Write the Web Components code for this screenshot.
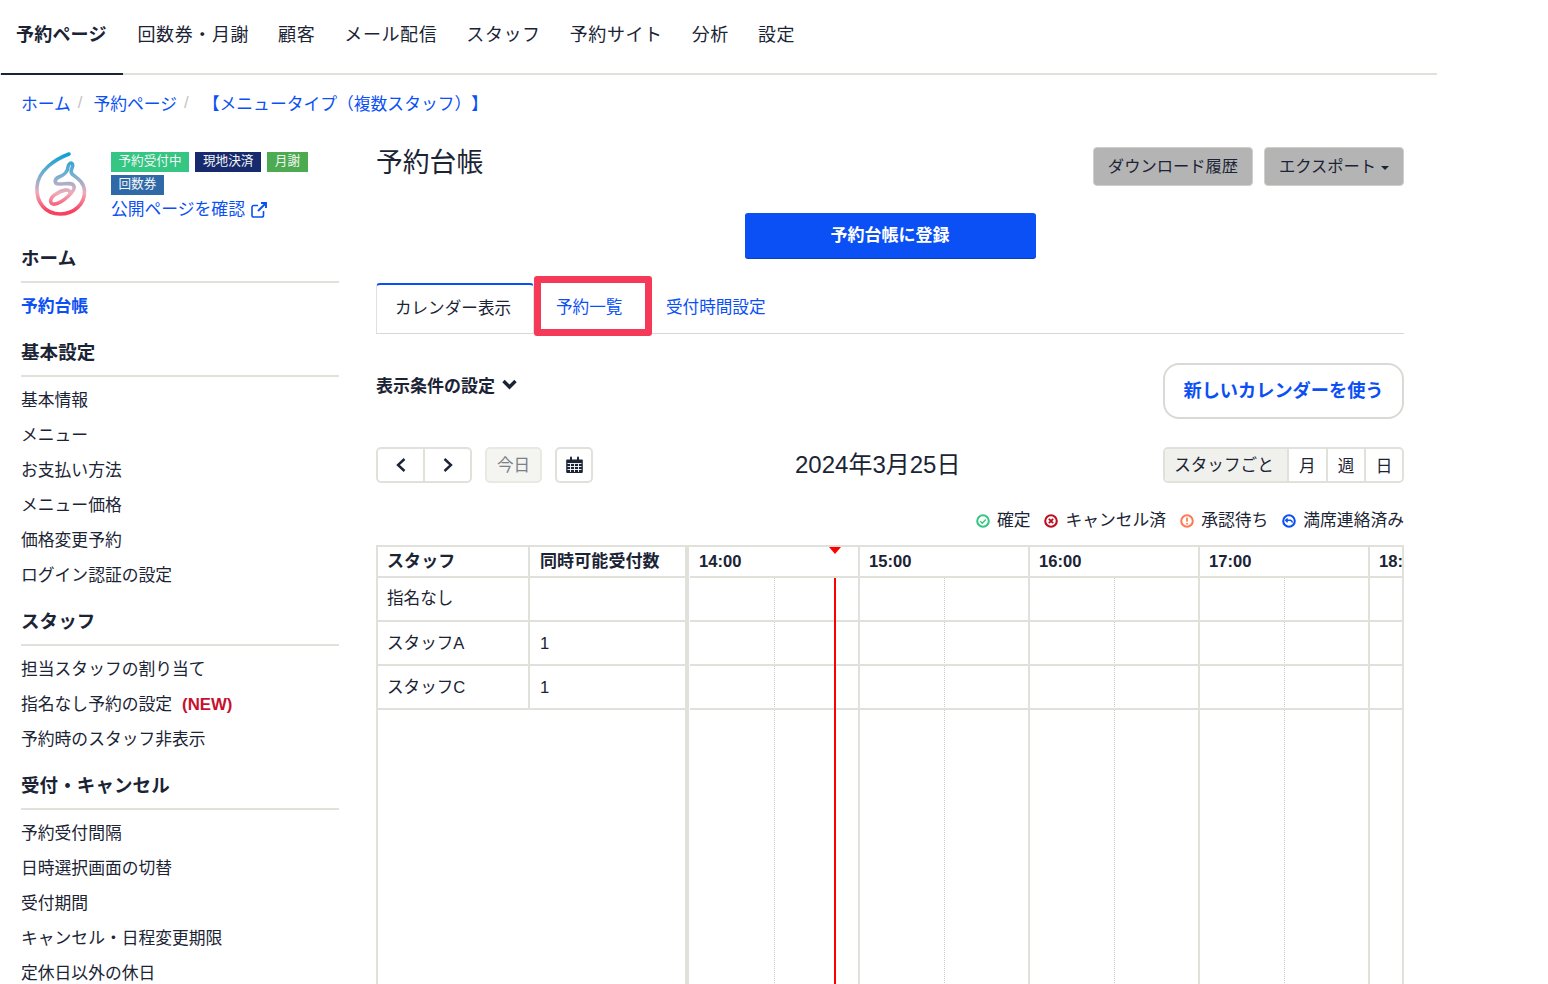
<!DOCTYPE html>
<html lang="ja">
<head>
<meta charset="utf-8">
<title>予約台帳</title>
<style>
  html, body { margin: 0; padding: 0; height: 984px; overflow: hidden; background: #fff; }
  body { font-family: "Liberation Sans", "Noto Sans CJK JP", sans-serif; color: #1b2435; }
</style>
</head>
<body>
<app-nav></app-nav>
<bread-crumbs></bread-crumbs>
<page-layout>
  <side-bar slot="side"></side-bar>
  <page-head></page-head>
  <view-tabs></view-tabs>
  <cal-filter></cal-filter>
  <cal-toolbar></cal-toolbar>
  <cal-legend></cal-legend>
  <sched-grid></sched-grid>
</page-layout>

<script>
const BLUE = '#0b50f5';
const LINE = '#e1e1dc';

// small base class: subclass only supplies html()
class Base extends HTMLElement {
  connectedCallback() {
    if (this.shadowRoot) return;
    this.attachShadow({ mode: 'open' }).innerHTML = this.html();
  }
}

class AppNav extends Base {
  html() {
    const items = ['回数券・月謝', '顧客', 'メール配信', 'スタッフ', '予約サイト', '分析', '設定'];
    return `<style>
      :host { display: block; width: 1437px; height: 75px; box-sizing: border-box; border-bottom: 2px solid ${LINE}; }
      nav { display: flex; height: 75px; box-sizing: border-box; padding-left: 1px; }
      a { display: block; font-size: 18px; letter-spacing: .6px; line-height: 70px; padding: 0 14.500px; white-space: nowrap; height: 75px; box-sizing: border-box; }
      .on { font-weight: 700; width: 122px; padding: 0 15px; border-bottom: 2px solid #1b2435; letter-spacing: .2px; }
    </style>
    <nav><a class="on">予約ページ</a>${items.map(t => `<a>${t}</a>`).join('')}</nav>`;
  }
}

class BreadCrumbs extends Base {
  html() {
    return `<style>
      :host { display: flex; height: 58px; align-items: center; padding: 0 0 2px 21px; font-size: 16.8px; box-sizing: border-box; text-spacing-trim: space-all; white-space: nowrap; }
      a { color: ${BLUE}; }
      span { color: #c4c4c0; margin: 0 11px 0 7px; }
      .last { margin-left: 3px; }
    </style>
    <a>ホーム</a><span>/</span><a>予約ページ</a><span>/</span><a class="last">【メニュータイプ（複数スタッフ）】</a>`;
  }
}

class PageLayout extends Base {
  html() {
    return `<style>
      :host { display: grid; grid-template-columns: 318px 1028px; column-gap: 37px; padding-left: 21px; padding-top: 8px; }
      .main { display: flex; flex-direction: column; min-width: 0; }
    </style>
    <slot name="side"></slot><div class="main"><slot></slot></div>`;
  }
}

class SideSection extends Base {
  html() {
    return `<style>
      :host { display: block; font-size: 17px; }
      h3 { margin: 0 0 6px; height: 53px; box-sizing: border-box; border-bottom: 2px solid ${LINE}; font-size: 18.5px; font-weight: 700; line-height: 24px; padding-top: 17px; letter-spacing: .1px; }
    </style>
    <h3>${this.getAttribute('title')}</h3><slot></slot>`;
  }
}

class SideItem extends Base {
  html() {
    const active = this.hasAttribute('active');
    return `<style>
      :host { display: block; height: 35px; line-height: 35px; font-size: 16.8px; white-space: nowrap; ${active ? `color:${BLUE};font-weight:700;` : ''} }
      ::slotted(b) { color: #c8102e; margin-left: 10px; }
    </style><slot></slot>`;
  }
}

class SideBar extends Base {
  html() {
    const tag = (t, c) => `<i style="background:${c}">${t}</i>`;
    return `<style>
      :host { display: block; }
      .shop { display: flex; height: 89px; box-sizing: border-box; }
      svg.logo { width: 62px; height: 72px; margin: 8px 19px 0 9px; flex: none; }
      .tags { display: flex; flex-wrap: wrap; gap: 3px 6.500px; padding-top: 11px; width: 210px; align-content: flex-start; }
      i { font-style: normal; color: #f3f6f4; font-size: 12.6px; line-height: 19px; height: 20px; padding: 0 7.500px; box-sizing: border-box; white-space: nowrap; }
      .pub { flex-basis: 100%; color: ${BLUE}; font-size: 16.8px; line-height: 24px; margin-top: 0; display: flex; align-items: center; gap: 5px; white-space: nowrap; }
    </style>
    <div class="shop">
      <svg class="logo" viewBox="30 150 62 72" fill="none">
        <defs><linearGradient id="g" gradientUnits="userSpaceOnUse" x1="0" y1="155" x2="0" y2="215">
          <stop offset="0" stop-color="#12a0d0"/><stop offset=".38" stop-color="#7db0d2"/><stop offset=".65" stop-color="#f2aab8"/><stop offset=".95" stop-color="#f8405f"/>
        </linearGradient></defs>
        <path d="M69 155 C56 160 38 171 37 188 C36 204 46 215 60 215 C74 215 85 205 84.500 192 C84 183 77 179 72 175 C69 172 74 168 72.500 165 C71 163 68 165 68 168 C68 172 64 176 59 178 C54 180 54 185 59 185 C66 185 72 183 74 187 C76 192 62 204 55 205 C49 206 49 199 56 195 C62 191 70 189 70 194" stroke="url(#g)" stroke-width="3.600" stroke-linecap="round" stroke-linejoin="round"/>
      </svg>
      <div class="tags">
        ${tag('予約受付中', '#34c682')}${tag('現地決済', '#172a6e')}${tag('月謝', '#4caa50')}${tag('回数券', '#2f69a8')}
        <div class="pub">公開ページを確認
          <svg width="18" height="18" viewBox="0 0 18 18" fill="none" stroke="${BLUE}" stroke-width="1.6"><path d="M13.500 10v4.200a1.800 1.800 0 0 1-1.800 1.800H3.800A1.800 1.800 0 0 1 2 14.200V6.300a1.800 1.800 0 0 1 1.800-1.800H8"/><path d="M11 2h5v5" stroke-width="1.900"/><path d="M16 2L8 10" stroke-width="1.900"/></svg>
        </div>
      </div>
    </div>
    <side-section title="ホーム"><side-item active>予約台帳</side-item></side-section>
    <side-section title="基本設定">
      <side-item>基本情報</side-item><side-item>メニュー</side-item><side-item>お支払い方法</side-item>
      <side-item>メニュー価格</side-item><side-item>価格変更予約</side-item><side-item>ログイン認証の設定</side-item>
    </side-section>
    <side-section title="スタッフ">
      <side-item>担当スタッフの割り当て</side-item>
      <side-item>指名なし予約の設定<b>(NEW)</b></side-item>
      <side-item>予約時のスタッフ非表示</side-item>
    </side-section>
    <side-section title="受付・キャンセル">
      <side-item>予約受付間隔</side-item><side-item>日時選択画面の切替</side-item><side-item>受付期間</side-item>
      <side-item>キャンセル・日程変更期限</side-item><side-item>定休日以外の休日</side-item>
    </side-section>`;
  }
}

class PageHead extends Base {
  html() {
    return `<style>
      :host { display: block; }
      .top { display: flex; align-items: flex-start; justify-content: space-between; height: 72px; }
      h1 { margin: 0; font-size: 26.800px; font-weight: 400; line-height: 40px; margin-top: 2px; }
      .btns { display: flex; gap: 11px; padding-top: 6px; }
      button { font: inherit; font-size: 16.300px; color: #1b2435; height: 39px; padding: 0 0 3px; border: 1px solid #cfcfc9; border-radius: 4px; background: #b4b4b4; display: flex; align-items: center; justify-content: center; gap: 5px; }
      .reg { display: block; width: 291px; height: 45px; margin: 0 auto; padding-bottom: 5px; background: ${BLUE}; color: #fff; font-weight: 700; font-size: 17px; border: 0; border-radius: 3px; font-family: inherit; box-shadow: 0 1px 0 #0a3fb8; }
      .car { width: 0; height: 0; border: 4px solid transparent; border-top-color: #1b2435; border-bottom: 0; margin-top: 6px; }
    </style>
    <div class="top"><h1>予約台帳</h1>
      <div class="btns"><button style="width:160px">ダウンロード履歴</button><button style="width:140px">エクスポート<span class="car"></span></button></div>
    </div>
    <button class="reg">予約台帳に登録</button>`;
  }
}

class ViewTabs extends Base {
  html() {
    return `<style>
      :host { display: flex; position: relative; height: 51px; margin-top: 25px; box-sizing: border-box; border-bottom: 1px solid #d9d9d4; font-size: 16.600px; }
      a { display: flex; align-items: center; height: 50px; box-sizing: border-box; color: ${BLUE}; white-space: nowrap; padding-bottom: 5px; }
      .on { width: 158px; padding-right: 4px; justify-content: center; color: #1b2435; background: #fff; border: 1px solid ${LINE}; border-top: 2px solid ${BLUE}; border-bottom: 0; border-radius: 4px 4px 0 0; }
      .b { padding-left: 22px; width: 108px; }
      .c { padding-left: 24px; }
      .mark { position: absolute; left: 157.500px; top: -7px; width: 118px; height: 60px; box-sizing: border-box; border: 7px solid #f43a58; border-radius: 3px; pointer-events: none; }
    </style>
    <a class="on">カレンダー表示</a><a class="b">予約一覧</a><a class="c">受付時間設定</a><div class="mark"></div>`;
  }
}

class CalFilter extends Base {
  html() {
    return `<style>
      :host { display: flex; justify-content: space-between; align-items: center; height: 56px; margin-top: 29px; }
      .f { display: flex; align-items: center; gap: 7px; font-weight: 700; font-size: 17px; margin-top: -13px; }
      a { display: flex; align-items: center; justify-content: center; width: 241px; height: 56px; box-sizing: border-box; border: 2px solid #d9d9d5; border-radius: 16px; color: ${BLUE}; font-weight: 700; font-size: 18.200px; padding-bottom: 4px; }
    </style>
    <div class="f">表示条件の設定<svg width="15" height="11" viewBox="0 0 15 11" fill="none" stroke="#1b2435" stroke-width="3.400"><path d="M1.500 2l6 6 6-6"/></svg></div>
    <a>新しいカレンダーを使う</a>`;
  }
}

class CalToolbar extends Base {
  html() {
    return `<style>
      :host { display: flex; align-items: center; height: 36px; margin-top: 28px; position: relative; font-size: 16.600px; }
      .grp { display: flex; height: 36px; box-sizing: border-box; border: 2px solid ${LINE}; border-radius: 5px; overflow: hidden; }
      .grp > * { display: flex; align-items: center; justify-content: center; border-left: 2px solid ${LINE}; box-sizing: border-box; padding-bottom: 1px; }
      .grp > :first-child { border-left: 0; }
      .today { width: 57px; height: 36px; margin-left: 13px; padding-bottom: 2px; box-sizing: border-box; border: 2px solid #e9e9e4; border-radius: 5px; background: #f4f4f1; color: #7c8088; display: flex; align-items: center; justify-content: center; }
      .calbtn { width: 38px; height: 36px; margin-left: 13px; box-sizing: border-box; border: 2px solid ${LINE}; border-radius: 5px; display: flex; align-items: center; justify-content: center; }
      .date { position: absolute; left: 419px; font-size: 24px; line-height: 36px; white-space: nowrap; }
      .views { margin-left: auto; width: 241px; }
      .sel { background: #f0f0ec; padding-right: 4px; padding-bottom: 3px !important; }
    </style>
    <div class="grp">
      <span style="width:45px"><svg width="12" height="16" viewBox="0 0 12 16" fill="none" stroke="#1b2435" stroke-width="2.400"><path d="M9.500 2L3 8l6.500 6"/></svg></span>
      <span style="width:47px"><svg width="12" height="16" viewBox="0 0 12 16" fill="none" stroke="#1b2435" stroke-width="2.400"><path d="M2.500 2L9 8l-6.500 6"/></svg></span>
    </div>
    <div class="today">今日</div>
    <div class="calbtn"><svg width="17" height="18" viewBox="0 0 17 18"><rect x="4" y="0.500" width="2" height="4" rx="1" fill="#1b2435"/><rect x="11" y="0.500" width="2" height="4" rx="1" fill="#1b2435"/><path d="M1 3.500h15a.8.8 0 0 1 .8.8V16a1 1 0 0 1-1 1H1.200a1 1 0 0 1-1-1V4.300a.8.8 0 0 1 .8-.8z" fill="#1b2435"/><path d="M1.500 7.500h14M1.500 10.500h14M1.500 13.500h14M4.500 7.500v8.500M8.500 7.500v8.500M12.500 7.500v8.500" stroke="#fff" stroke-width=".9"/></svg></div>
    <div class="date">2024年3月25日</div>
    <div class="grp views">
      <span class="sel" style="width:123px">スタッフごと</span><span style="width:39px">月</span><span style="width:39px">週</span><span style="width:38px">日</span>
    </div>`;
  }
}

class CalLegend extends Base {
  html() {
    const ic = (c, inner) => `<svg width="14" height="14" viewBox="0 0 15 15" fill="none" stroke="${c}" stroke-width="2.200"><circle cx="7.500" cy="7.500" r="6.200"/>${inner}</svg>`;
    return `<style>
      :host { display: flex; justify-content: flex-end; gap: 14px; height: 26px; margin-top: 25px; margin-bottom: 11px; font-size: 16.800px; line-height: 26px; }
      span { display: flex; align-items: center; gap: 7px; white-space: nowrap; }
    </style>
    <span>${ic('#34c682', '<path d="M4.500 7.700l2.200 2.100 3.800-4" stroke-width="1.500"/>')}確定</span>
    <span>${ic('#c00d1e', '<path d="M5.200 5.200l4.600 4.600M9.800 5.200l-4.600 4.600" stroke-width="2"/>')}キャンセル済</span>
    <span>${ic('#ff7a50', '<path d="M7.500 3.800v4.600M7.500 9.600v1.700" stroke-width="1.800"/>')}承認待ち</span>
    <span>${ic(BLUE, '<path d="M4.200 6.800h4.500a2.200 2.200 0 0 1 2.200 2.400M6 4.800l-2 2 2 2" stroke-width="1.600"/>')}満席連絡済み</span>`;
  }
}

class SchedGrid extends Base {
  html() {
    const staff = [['指名なし', ''], ['スタッフA', '1'], ['スタッフC', '1']];
    const hours = ['14:00', '15:00', '16:00', '17:00', '18:'];
    const left = staff.map(([n, c]) =>
      `<div class="row"><div class="c1">${n}</div><div class="c2">${c}</div></div>`).join('');
    const cols = hours.map(h => `<div class="hour"><div class="hd">${h}</div><div class="half"></div></div>`).join('');
    const lines = staff.map(() => `<div class="tl"></div>`).join('');
    return `<style>
      :host { display: flex; box-sizing: border-box; height: 440px; width: 1028px; border: solid ${LINE}; border-width: 2px 2px 0 2px; font-size: 16.600px; overflow: hidden; }
      .left { width: 307px; flex: none; margin-right: 1px; border-right: 4px solid ${LINE}; box-sizing: content-box; }
      .row { display: flex; box-sizing: border-box; border-bottom: 2px solid ${LINE}; height: 44px; }
      .c1 { width: 152px; padding: 8px 9px 0; box-sizing: border-box; border-right: 2px solid ${LINE}; }
      .c2 { flex: 1; padding: 8px 10px 0; }
      .head { height: 31px; font-weight: 700; font-size: 17px; }
      .head .c1, .head .c2 { padding-top: 3px; line-height: 24px; letter-spacing: .1px; }
      .body .c1, .body .c2 { padding-top: 9px; line-height: 24px; }
      .body .row + .row .c1, .body .row + .row .c2 { padding-top: 10px; }
      .right { position: relative; flex: 1; overflow: hidden; display: flex; }
      .hour { width: 170px; flex: none; box-sizing: border-box; border-right: 2px solid ${LINE}; position: relative; }
      .hd { height: 31px; line-height: 29px; font-weight: 700; padding-left: 9px; border-bottom: 2px solid ${LINE}; box-sizing: border-box; white-space: nowrap; }
      .half { position: absolute; left: 84px; top: 31px; bottom: 0; border-left: 1px dotted #c9c9c4; }
      .lines { position: absolute; left: 0; right: 0; top: 31px; }
      .tl { box-sizing: border-box; border-bottom: 2px solid ${LINE}; height: 44px; }
      .now { position: absolute; left: 144px; top: 31px; bottom: 0; width: 2px; background: #f00; }
      .tri { position: absolute; left: 139px; top: 0; width: 0; height: 0; border: 6px solid transparent; border-top: 7px solid #f00; border-bottom: 0; }
    </style>
    <div class="left">
      <div class="row head"><div class="c1">スタッフ</div><div class="c2">同時可能受付数</div></div>
      <div class="body">${left}</div>
    </div>
    <div class="right">${cols}<div class="lines">${lines}</div><div class="tri"></div><div class="now"></div></div>`;
  }
}

customElements.define('app-nav', AppNav);
customElements.define('bread-crumbs', BreadCrumbs);
customElements.define('page-layout', PageLayout);
customElements.define('side-section', SideSection);
customElements.define('side-item', SideItem);
customElements.define('side-bar', SideBar);
customElements.define('page-head', PageHead);
customElements.define('view-tabs', ViewTabs);
customElements.define('cal-filter', CalFilter);
customElements.define('cal-toolbar', CalToolbar);
customElements.define('cal-legend', CalLegend);
customElements.define('sched-grid', SchedGrid);
</script>
</body>
</html>
